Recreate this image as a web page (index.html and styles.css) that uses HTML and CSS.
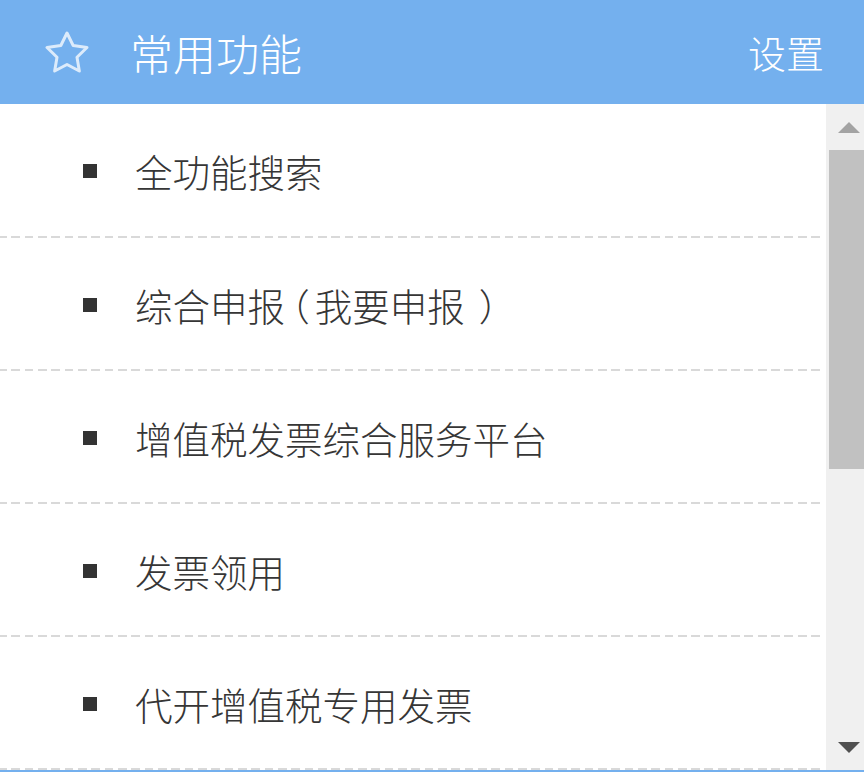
FILE: index.html
```html
<!DOCTYPE html>
<html lang="zh-CN">
<head>
<meta charset="utf-8">
<title>常用功能</title>
<link rel="stylesheet" href="styles.css">
</head>
<body>
<div class="panel">
  <header class="head">
    <svg class="star" width="44" height="44" viewBox="0 0 44 44" aria-hidden="true">
      <polygon points="22,3 28.17,15.51 41.97,17.51 31.99,27.24 34.34,40.99 22,34.5 9.66,40.99 12.01,27.24 2.03,17.51 15.83,15.51" />
    </svg>
    <h1 class="title">常用功能</h1>
    <a class="setting" href="#">设置</a>
  </header>
  <div class="body">
    <ul class="list">
      <li class="item"><span class="dot"></span><span class="label">全功能搜索</span></li>
      <li class="item"><span class="dot"></span><span class="label">综合申报<span class="lp">（</span>我要申报<span class="rp">）</span></span></li>
      <li class="item"><span class="dot"></span><span class="label">增值税发票综合服务平台</span></li>
      <li class="item"><span class="dot"></span><span class="label">发票领用</span></li>
      <li class="item"><span class="dot"></span><span class="label">代开增值税专用发票</span></li>
    </ul>
    <div class="scrollbar">
      <div class="sb-btn"><span class="arrow-up"></span></div>
      <div class="sb-track"><div class="sb-thumb"></div></div>
      <div class="sb-btn"><span class="arrow-down"></span></div>
    </div>
  </div>
</div>
</body>
</html>
```

FILE: styles.css
```css
html, body {
  margin: 0;
  padding: 0;
  background: #ffffff;
}

body {
  width: 864px;
  height: 772px;
  overflow: hidden;
  font-family: "Noto Sans CJK SC", "Microsoft YaHei", sans-serif;
}

.panel {
  width: 864px;
  height: 772px;
  display: flex;
  flex-direction: column;
  border-bottom: 2px solid #74b0ee;
  box-sizing: border-box;
}

.head {
  height: 104px;
  flex: 0 0 104px;
  background: #74b0ee;
  display: flex;
  align-items: center;
  padding: 0 40px 0 45px;
}

.star {
  flex: 0 0 44px;
}

.star polygon {
  fill: none;
  stroke: rgba(255, 255, 255, 0.75);
  stroke-width: 3;
  stroke-linejoin: round;
  filter: blur(0.4px);
}

.title {
  margin: 0 0 0 41px;
  font-size: 43px;
  font-weight: 300;
  color: #ffffff;
  line-height: 1;
  flex: 1;
}

.setting {
  font-size: 38px;
  font-weight: 300;
  color: #ffffff;
  text-decoration: none;
  line-height: 1;
}

.body {
  flex: 1;
  display: flex;
  min-height: 0;
}

.list {
  list-style: none;
  margin: 0;
  padding: 1px 0 0;
  flex: 1;
}

.item {
  display: flex;
  align-items: center;
  padding-left: 83px;
  padding-top: 2px;
  box-sizing: border-box;
  border-bottom: 2px solid transparent;
  background-image: repeating-linear-gradient(to right, #d9d9d9 0, #d9d9d9 8.7px, transparent 8.7px, transparent 13.33px);
  background-size: 100% 2px;
  background-repeat: no-repeat;
  background-position: -2px 100%;
  background-origin: border-box;
  height: 133px;
}

.item:first-child {
  margin-top: -1px;
  height: 134px;
}

.dot {
  width: 14px;
  height: 14px;
  background: #333333;
  flex: 0 0 14px;
}

.label {
  margin-left: 38px;
  font-size: 37.5px;
  font-weight: 300;
  color: #363636;
  line-height: 1;
  white-space: nowrap;
}

.lp {
  font-feature-settings: "halt";
  margin: 0 5px 0 6px;
}

.rp {
  font-feature-settings: "halt";
  margin-left: 14px;
}

.scrollbar {
  width: 38px;
  flex: 0 0 38px;
  background: #f0f0f0;
  display: flex;
  flex-direction: column;
}

.sb-btn {
  height: 46px;
  flex: 0 0 46px;
  display: flex;
  align-items: center;
  justify-content: center;
  padding-left: 8px;
}

.arrow-up {
  width: 0;
  height: 0;
  border-left: 11px solid transparent;
  border-right: 11px solid transparent;
  border-bottom: 11px solid #a3a3a3;
}

.arrow-down {
  width: 0;
  height: 0;
  border-left: 11px solid transparent;
  border-right: 11px solid transparent;
  border-top: 11px solid #505050;
}

.sb-track {
  flex: 1;
  padding-left: 3px;
}

.sb-thumb {
  height: 319px;
  background: #c1c1c1;
}
```
